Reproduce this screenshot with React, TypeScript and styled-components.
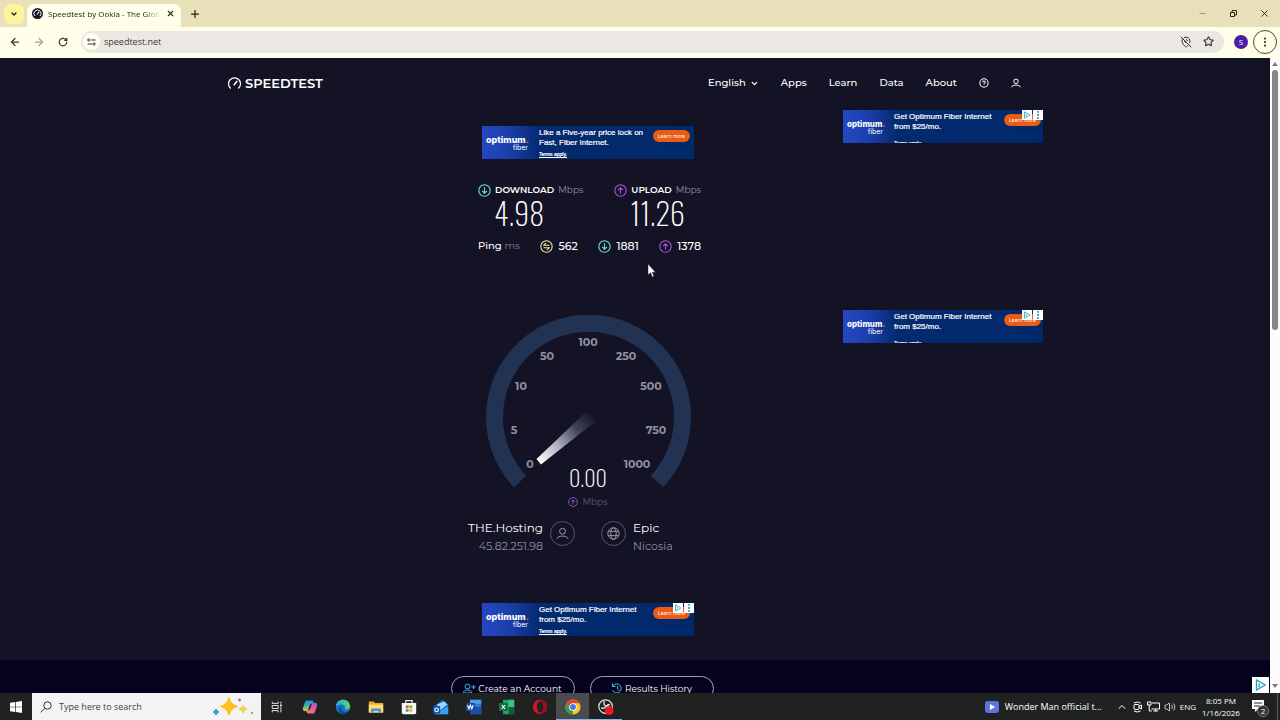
import React from "react";
import styled, { createGlobalStyle, css } from "styled-components";
import {
  ArrowLeft,
  ArrowRight,
  ChevronDown,
  ChevronUp,
  CircleHelp,
  EllipsisVertical,
  MapPinOff,
  Minus,
  Plus,
  RotateCw,
  Star,
  Volume2,
  X,
} from "lucide-react";

const GlobalStyle = createGlobalStyle`
  * { box-sizing: border-box; }
  body { margin: 0; background: #141325; overflow: hidden; }
  button, input { font: inherit; color: inherit; margin: 0; }
  button { background: none; border: 0; padding: 0; cursor: pointer; }
  a { color: inherit; text-decoration: none; }
  h2, p { margin: 0; font-weight: inherit; }
`;

const UI_FONT = `"Open Sans", "Noto Sans", sans-serif`;
const SITE_FONT = `Montserrat, Inter, sans-serif`;
const NARROW_FONT = `Oswald, "Roboto Condensed", "Liberation Sans Narrow", Roboto, sans-serif`;

const Desktop = styled.div`
  display: grid;
  grid-template-rows: 27px 31px minmax(0, 1fr) 27px;
  height: 100vh;
  font-family: ${UI_FONT};
`;

/* ---------- browser chrome ---------- */

const TabStrip = styled.header`
  display: flex;
  align-items: center;
  background: #e8e0b8;
  color: #26251c;
  padding: 0 0 0 4px;
`;

const TabSearch = styled.button`
  display: grid;
  place-items: center;
  width: 20px;
  height: 20px;
  border-radius: 6px;
  background: #fbf49c;
  margin-right: 3px;
`;

const Tab = styled.div`
  display: flex;
  align-items: center;
  align-self: end;
  gap: 5px;
  width: 154px;
  height: 23px;
  padding: 0 6px 4px 5px;
  border-radius: 7px 7px 0 0;
  background: #fffee8;
`;

const TabTitle = styled.span`
  flex: 1;
  overflow: hidden;
  white-space: nowrap;
  font-size: 8px;
  line-height: 14px;
  mask-image: linear-gradient(90deg, #000 86%, transparent);
`;

const IconButton = styled.button<{ $w?: number }>`
  display: grid;
  place-items: center;
  width: ${(p) => p.$w ?? 24}px;
  height: 20px;
  flex: none;
`;

const WindowControls = styled.div`
  display: flex;
  margin-left: auto;
`;

const Toolbar = styled.nav`
  display: flex;
  align-items: center;
  background: #fffee8;
  color: #3a392f;
  padding: 0 3px 2px;
`;

const AddressBar = styled.label`
  display: flex;
  align-items: center;
  flex: 1;
  height: 22px;
  margin: 0 10px 0 6px;
  padding: 0 5px 0 2px;
  border-radius: 11px;
  background: #ebe8e3;
`;

const SiteInfo = styled.span`
  display: grid;
  place-items: center;
  width: 17px;
  height: 17px;
  border-radius: 50%;
  background: #fffef2;
  margin-right: 4px;
`;

const AddressInput = styled.input`
  flex: 1;
  min-width: 0;
  border: 0;
  padding: 0;
  background: none;
  outline: none;
  font-size: 9px;
  line-height: 14px;
`;

const Avatar = styled.button`
  width: 14px;
  height: 14px;
  border-radius: 50%;
  background: #4a1fa5;
  color: #fff;
  font-size: 8px;
  line-height: 14px;
`;

const MenuButton = styled.button`
  display: grid;
  place-items: center;
  width: 24px;
  height: 24px;
  margin-left: 5px;
  border: 1px solid #4d4a20;
  border-radius: 50%;
`;

/* ---------- web page ---------- */

const Viewport = styled.div`
  display: flex;
  min-height: 0;
`;

const Page = styled.div`
  position: relative;
  flex: 1;
  min-width: 0;
  overflow: hidden;
  background: #141325;
  color: #fff;
  font-family: ${SITE_FONT};
`;

const ScrollTrack = styled.div`
  display: flex;
  flex-direction: column;
  align-items: center;
  width: 10px;
  background: #fcfcfc;
`;

const ScrollArrow = styled.span<{ $down?: boolean }>`
  border: 3px solid transparent;
  border-top-width: ${(p) => (p.$down ? 4 : 0)}px;
  border-bottom-width: ${(p) => (p.$down ? 0 : 4)}px;
  ${(p) => (p.$down ? "border-top-color" : "border-bottom-color")}: #7b7b7b;
  margin: ${(p) => (p.$down ? "auto 0 5px" : "4px 0")};
`;

const ScrollThumb = styled.div`
  width: 6px;
  height: 41%;
  border-radius: 3px;
  background: #858585;
`;

const Container = styled.div`
  width: 100%;
  max-width: 816px;
  margin: 0 auto;
`;

const SiteHeader = styled(Container)`
  display: flex;
  align-items: center;
  height: 50px;
  padding: 0 22px 0 1px;
`;

const Brand = styled.a`
  display: flex;
  align-items: center;
  gap: 4px;
  font-size: 13px;
  line-height: 16px;
  font-weight: 600;
`;

const SiteNav = styled.nav`
  display: flex;
  align-items: center;
  gap: 22px;
  margin-left: auto;
  font-size: 10px;
  line-height: 16px;
  font-weight: 500;

  a, button { display: flex; align-items: center; gap: 4px; }
`;

const Columns = styled(Container)`
  display: grid;
  grid-template-columns: minmax(0, 1fr) 200px;
  height: 552px;
`;

const TestColumn = styled.main`
  display: flex;
  flex-direction: column;
  align-items: center;
  padding: 18px 0 0 106px;
`;

const AdColumn = styled.aside`
  display: flex;
  flex-direction: column;
  gap: 167px;
  padding-top: 2px;
`;

const AdBox = styled.a<{ $compact?: boolean }>`
  position: relative;
  display: flex;
  width: ${(p) => (p.$compact ? 200 : 212)}px;
  height: 33px;
  padding: ${(p) => (p.$compact ? "2px 2px 0 4px" : "2px 4px 0 4px")};
  overflow: hidden;
  background: linear-gradient(90deg, #2448c4 0, #1c3fae 12%, #042a70 27%, #00296a 100%);
  font-family: Inter, sans-serif;
`;

const AdLogo = styled.span<{ $compact?: boolean }>`
  flex: none;
  width: ${(p) => (p.$compact ? 38 : 44)}px;
  margin: 8px 9px 0 0;
  font-size: ${(p) => (p.$compact ? 8 : 9)}px;
  line-height: 8px;
  font-weight: 800;

  i { color: #f26722; font-style: normal; }
  small { display: block; font-size: 7px; line-height: 7px; font-weight: 400; text-align: right; padding-right: 2px; }
`;

const AdCopy = styled.span<{ $compact?: boolean }>`
  flex: 1;
  white-space: nowrap;
  font-family: "Liberation Sans", sans-serif;
  font-size: 8px;
  line-height: 10px;
  -webkit-text-stroke: 0.2px #fff;

  u { display: block; font-size: 5px; line-height: 8px; margin-top: ${(p) => (p.$compact ? 7 : 2)}px; }
`;

const AdAction = styled.span`
  flex: none;
  width: 37px;
  height: 12px;
  margin-top: 2px;
  border-radius: 6px;
  background: #ea5b16;
  font-size: 5px;
  line-height: 12px;
  text-align: center;
`;

const AdMarks = styled.span`
  position: absolute;
  top: 0;
  right: 0;
  display: flex;
  gap: 1px;

  svg { display: block; background: #fff; }
`;

const Results = styled.section`
  display: flex;
  justify-content: space-between;
  width: 226px;
  padding-left: 3px;
  margin-top: 23px;
`;

const Result = styled.div`
  display: flex;
  flex-direction: column;
`;

const ResultTitle = styled.h2`
  display: flex;
  align-items: center;
  gap: 4px;
  font-size: 9px;
  line-height: 16px;
  font-weight: 600;

  small { font-size: 9px; font-weight: 400; color: #9192a6; }
`;

const bigNumber = css`
  font-family: ${NARROW_FONT};
  font-weight: 200;
`;

const ResultValue = styled.p`
  ${bigNumber}
  padding-left: 16px;
  font-size: 30px;
  line-height: 30px;
`;

const PingRow = styled.section`
  display: flex;
  align-items: center;
  justify-content: space-between;
  width: 226px;
  padding-left: 3px;
  margin-top: 10px;
  font-size: 10px;
  line-height: 16px;
  font-weight: 500;

  small { font-size: 10px; font-weight: 400; color: #7d7e92; }
`;

const PingItem = styled.span`
  display: flex;
  align-items: center;
  gap: 5px;
  font-size: 11px;
`;

const Gauge = styled.section`
  display: grid;
  justify-items: center;
  height: 195px;
  margin-top: 61px;

  > * { grid-area: 1 / 1; }
`;

const GaugeLabel = styled.text`
  fill: #9091a2;
  font-size: 11px;
  font-weight: 700;
  text-anchor: middle;
`;

const Readout = styled.div`
  display: flex;
  flex-direction: column;
  align-items: center;
  align-self: end;
`;

const ReadoutValue = styled.output`
  ${bigNumber}
  font-size: 22px;
  line-height: 34px;
`;

const ReadoutUnit = styled.span`
  display: flex;
  align-items: center;
  gap: 4px;
  font-size: 9px;
  line-height: 16px;
  color: #5d5e72;
`;

const Hosts = styled.section`
  display: grid;
  grid-template-columns: 1fr 1fr;
  gap: 26px;
  width: 100%;
  margin-top: 8px;
`;

const Host = styled.div<{ $reverse?: boolean }>`
  display: flex;
  align-items: flex-start;
  flex-direction: ${(p) => (p.$reverse ? "row-reverse" : "row")};
  text-align: ${(p) => (p.$reverse ? "right" : "left")};
  gap: 7px;
  font-size: 12px;
  line-height: 20px;

  small { display: block; font-size: 11px; line-height: 16px; color: #8f90a3; }
`;

const HostIcon = styled.span`
  display: grid;
  place-items: center;
  width: 25px;
  height: 25px;
  margin-top: 3px;
  border: 1px solid #55566b;
  border-radius: 50%;
  color: #a3a4b4;
`;

const BottomAd = styled.div`
  margin-top: 49px;
`;

const PageFooter = styled.footer`
  height: 60px;
  padding: 16px 106px 0 0;
  background: #05021e;
`;

const FooterActions = styled.div`
  display: flex;
  justify-content: center;
  gap: 15px;
`;

const PillButton = styled.button`
  display: flex;
  align-items: center;
  justify-content: center;
  gap: 2px;
  width: 124px;
  height: 25px;
  border: 1px solid #9fa0b4;
  border-radius: 13px;
  font-size: 9px;
  line-height: 16px;
`;

const CornerMark = styled.a`
  position: absolute;
  right: 1px;
  bottom: 0;
  display: block;
  width: 17px;
  height: 16px;
  background: #fff;
`;

const Cursor = styled.svg`
  position: absolute;
  top: 205px;
  left: calc(50% + 12px);
`;

/* ---------- taskbar ---------- */

const Taskbar = styled.footer`
  display: flex;
  align-items: stretch;
  background: #202222;
  color: #fff;
  font-size: 8px;
`;

const StartButton = styled.button`
  display: grid;
  place-items: center;
  width: 32px;
`;

const SearchBox = styled.label`
  display: flex;
  align-items: center;
  gap: 7px;
  width: 229px;
  padding: 0 5px 0 8px;
  background: #f3f3f3;
  color: #333;
`;

const SearchInput = styled.input`
  flex: 1;
  min-width: 0;
  border: 0;
  padding: 0;
  outline: none;
  background: none;
  font-size: 9px;
  line-height: 16px;

  &::placeholder { color: #444; opacity: 1; }
`;

const TaskApps = styled.div`
  display: grid;
  grid-template-columns: repeat(11, minmax(0, 1fr));
  width: 361px;
`;

const TaskApp = styled.button<{ $active?: boolean; $running?: boolean }>`
  display: grid;
  place-items: center;
  background: ${(p) => (p.$active ? "#4a4b4d" : "none")};
  border-top: 1px solid transparent;
  border-bottom: 1px solid ${(p) => (p.$active || p.$running ? "#76b9ed" : "transparent")};
`;

const Tray = styled.div`
  display: flex;
  align-items: center;
  gap: 4px;
  margin-left: auto;
  padding-right: 2px;
`;

const NewsButton = styled.button`
  display: flex;
  align-items: center;
  gap: 6px;
  margin-right: 10px;
  font-size: 9px;
`;

const Clock = styled.time`
  width: 42px;
  font-size: 8px;
  line-height: 12px;
  text-align: center;
`;

const Notifications = styled.button`
  width: 20px;
  height: 20px;
  margin-left: 4px;
`;

const ShowDesktop = styled.span`
  width: 1px;
  height: 27px;
  margin-left: 3px;
  background: #5a5b5b;
`;

/* ---------- drawings ---------- */

const SpeedGlyph = () => (
  <svg width="13" height="13" viewBox="0 0 26 26" fill="none" stroke="currentColor" strokeWidth="2.4" aria-hidden="true">
    <path d="M5.500 23A12 12 0 1 1 20.500 23" />
    <path d="M11.500 16.500 18.500 8" strokeWidth="3.200" />
  </svg>
);

const Favicon = () => (
  <svg width="11" height="11" viewBox="0 0 22 22" aria-hidden="true">
    <circle cx="11" cy="11" r="11" fill="#141526" />
    <path d="M6 16a7 7 0 1 1 10 0" fill="none" stroke="#fff" strokeWidth="2" />
    <path d="m10 13 4-5" stroke="#fff" strokeWidth="2.400" />
  </svg>
);

type Direction = "down" | "up" | "idle";
const tone: Record<Direction, string> = { down: "#6fe3cf", up: "#a459dc", idle: "#f0eb9a" };
const mark: Record<Direction, string> = {
  down: "M12 6v11M7.500 12.500 12 17l4.500-4.500",
  up: "M12 18V7M7.500 11.500 12 7l4.500 4.500",
  idle: "M17.500 9.800H7l4-4M6.500 14.200H17l-4 4",
};
const DirectionIcon = ({ kind, size = 13 }: { kind: Direction; size?: number }) => (
  <svg width={size} height={size} viewBox="0 0 24 24" fill="none" stroke={tone[kind]} strokeWidth="2" aria-hidden="true">
    <circle cx="12" cy="12" r="10.500" />
    <path d={mark[kind]} />
  </svg>
);

const PersonIcon = ({ size, width = 1.6 }: { size: number; width?: number }) => (
  <svg width={size} height={size} viewBox="0 0 20 20" fill="none" stroke="currentColor" strokeWidth={width} aria-hidden="true">
    <circle cx="10" cy="6.500" r="4.500" />
    <path d="M1.500 18.500c0-6 17-6 17 0" />
  </svg>
);

const GlobeIcon = () => (
  <svg width="13" height="13" viewBox="0 0 24 24" fill="none" stroke="currentColor" strokeWidth="1.700" aria-hidden="true">
    <circle cx="12" cy="12" r="10.500" />
    <ellipse cx="12" cy="12" rx="5" ry="10.500" />
    <path d="M2.500 8h19M2.500 16h19" />
  </svg>
);

const ChoicePath = () => (
  <>
    <path d="M3 2.200v7.600L9.500 6z" fill="none" stroke="#25a5bd" strokeWidth="1" />
    <path d="M5 4.800v2.800" stroke="#25a5bd" />
  </>
);

const labels: [string, number, number][] = [
  ["0", 46, 153],
  ["5", 30, 119],
  ["10", 37, 75],
  ["50", 63, 45],
  ["100", 104, 31],
  ["250", 142, 45],
  ["500", 167, 75],
  ["750", 172, 119],
  ["1000", 153, 153],
];

const GaugeDial = () => (
  <svg width="208" height="174" viewBox="0 0 208 174" role="img" aria-label="Speed gauge">
    <defs>
      <linearGradient id="needle" gradientUnits="userSpaceOnUse" x1="55" y1="148" x2="110" y2="100">
        <stop offset="0" stopColor="#fff" />
        <stop offset=".35" stopColor="#b0b0bd" />
        <stop offset=".7" stopColor="#3c4358" />
        <stop offset="1" stopColor="#141325" />
      </linearGradient>
    </defs>
    <path d="M36 166.500A94 94 0 1 1 173 166.500" fill="none" stroke="#213253" strokeWidth="17" />
    <path d="M52.500 144 57 149.500 112 106 103 96z" fill="url(#needle)" />
    {labels.map(([text, x, y]) => (
      <GaugeLabel key={text} x={x} y={y}>{text}</GaugeLabel>
    ))}
  </svg>
);

const Ad = ({ lines, compact, marks }: { lines: string[]; compact?: boolean; marks?: boolean }) => (
  <AdBox href="#" $compact={compact}>
    <AdLogo $compact={compact}>optimum<i>.</i><small>fiber</small></AdLogo>
    <AdCopy $compact={compact}>
      {lines[0]}<br />{lines[1]}
      <u>Terms apply.</u>
    </AdCopy>
    <AdAction>Learn more</AdAction>
    {marks && (
      <AdMarks>
        <svg width="10" height="10" viewBox="0 0 12 12"><ChoicePath /></svg>
        <svg width="10" height="10" viewBox="0 0 10 11" fill="#25a5bd"><path d="M4 1h2v2H4zM4 4.500h2v2H4zM4 8h2v2H4z" /></svg>
      </AdMarks>
    )}
  </AdBox>
);

const apps: { name: string; art: React.ReactNode; active?: boolean; running?: boolean }[] = [
  {
    name: "Task View",
    art: <g fill="none" stroke="#f4f4f4" strokeWidth="1.500"><path d="M2 1v3h10V1M2 19v-3h10v3M2 7.500h10v5H2zM16.500 1v3.500M16.500 9v10" /><path d="M15 7h3" strokeWidth="2.500" /></g>,
  },
  {
    name: "Copilot",
    art: <>
      <defs>
        <linearGradient id="copA" x1="0" y1="0" x2="0" y2="1"><stop stopColor="#1f8df0" /><stop offset=".5" stopColor="#35b6a0" /><stop offset="1" stopColor="#f3c62c" /></linearGradient>
        <linearGradient id="copB" x1="1" y1="0" x2="0" y2="1"><stop stopColor="#a052e8" /><stop offset=".5" stopColor="#ea5a9b" /><stop offset="1" stopColor="#f78a3c" /></linearGradient>
      </defs>
      <path d="M6 2h6q2 0 2.500 2L15 6h-3q-2 0-2.500 2L8 13q-.7 2-2.500 2H3q-2.500 0-2-3L3.500 4.500Q4 2 6 2z" fill="url(#copA)" />
      <path d="M14 18H8q-2 0-2.500-2L5 14h3q2 0 2.500-2L12 7q.7-2 2.500-2H17q2.500 0 2 3l-2.500 7.500Q16 18 14 18z" fill="url(#copB)" />
    </>,
  },
  {
    name: "Edge",
    art: <>
      <defs><linearGradient id="edge" x1="0" y1="0" x2="1" y2="0"><stop stopColor="#2aa7e6" /><stop offset="1" stopColor="#5fd467" /></linearGradient></defs>
      <circle cx="10" cy="10" r="9" fill="#1470c8" />
      <path d="M1 10a9 9 0 0 1 18-1c.3 4-5 5-7 3.500 2-3-1-5.500-4-5.500-4 0-6.500 2-7 3z" fill="url(#edge)" />
      <path d="M8 9c-2 6 4 9 9 6-2 3.500-8 5-11 1.500C4 14 5.500 10.500 8 9z" fill="#0d4a97" />
    </>,
  },
  {
    name: "File Explorer",
    art: <><path d="M1 3h6l2 2h10v12H1z" fill="#e9aa2b" /><path d="M1 7h18v10H1z" fill="#ffdc76" /><path d="M4 17v-5h12v5h-3v-2H7v2z" fill="#3a95dc" /></>,
  },
  {
    name: "Microsoft Store",
    art: <><path d="M6 5V2h8v3" fill="none" stroke="#e8e8e8" strokeWidth="1.500" /><path d="M1 5h18v12q0 2-2 2H3q-2 0-2-2z" fill="#f6f6f6" /><path d="M6 8h3.500v3.500H6z" fill="#e8502b" /><path d="M10.500 8H14v3.500h-3.500z" fill="#79b82d" /><path d="M6 12.500h3.500V16H6z" fill="#2aa1e0" /><path d="M10.500 12.500H14V16h-3.500z" fill="#f6b61c" /></>,
  },
  {
    name: "Outlook",
    art: <><path d="m2 8 10-7 7 6v11q0 1-1 1H3q-1 0-1-1z" fill="#1b66c9" /><path d="m5 7 9-4 4 4-9 7z" fill="#9bd8ff" /><path d="m2 19 17-10v9q0 1-1 1z" fill="#35a4ef" /><path d="M0 9h9v9H0z" fill="#0d4ea6" /><circle cx="4.500" cy="13.500" r="2.300" fill="none" stroke="#fff" strokeWidth="1.400" /></>,
  },
  {
    name: "Word",
    art: <><path d="M5 1h14v18H5z" fill="#2f7cd6" /><path d="M5 10h14v9H5z" fill="#1b4fa5" /><path d="M5 1h14v5H5z" fill="#48a0ec" /><path d="M0 5h11v10H0z" fill="#174a9c" /><path d="m2 7.500 1.700 5 1.800-5 1.800 5 1.700-5" fill="none" stroke="#fff" strokeWidth="1.300" /></>,
  },
  {
    name: "Excel",
    art: <><path d="M5 1h14v18H5z" fill="#22a466" /><path d="M12 10h7v9h-7z" fill="#145c37" /><path d="M12 1h7v9h-7z" fill="#35c481" /><path d="M0 5h11v10H0z" fill="#10703f" /><path d="m3.500 7.500 4 5m0-5-4 5" stroke="#fff" strokeWidth="1.500" /></>,
  },
  {
    name: "Opera",
    art: <><circle cx="10" cy="10" r="9" fill="#d5122b" /><path d="M10 1a9 9 0 0 1 0 18z" fill="#97101f" /><ellipse cx="10" cy="10" rx="4" ry="6.800" fill="#202222" /></>,
  },
  {
    name: "Chrome",
    active: true,
    art: <><circle cx="10" cy="10" r="9.500" fill="#f9c523" /><path d="M1.800 5.200A9.500 9.500 0 0 1 18.200 5.200H10L6 12.300z" fill="#e44234" /><path d="M1.800 5.200 6 12.300l4 2.500-.5 4.700A9.500 9.500 0 0 1 1.800 5.200z" fill="#30a04f" /><circle cx="10" cy="10" r="4.800" fill="#fff" /><circle cx="10" cy="10" r="3.700" fill="#3c7eea" /></>,
  },
  {
    name: "OBS Studio",
    running: true,
    art: <><circle cx="9.500" cy="9.500" r="8.500" fill="#242526" stroke="#ddd" strokeWidth="1.500" /><path d="M8 3q-2 4 2 6 4-1 5 3M10 9q-2 4-6 2M10 9q3-3 5-2" fill="none" stroke="#ddd" strokeWidth="1.700" /><circle cx="14" cy="14.500" r="5.500" fill="#f01818" /></>,
  },
];

export default function App() {
  return (
    <Desktop>
      <GlobalStyle />
      <TabStrip>
        <TabSearch aria-label="Search tabs"><ChevronDown size={8} strokeWidth={4} /></TabSearch>
        <Tab>
          <Favicon />
          <TabTitle>Speedtest by Ookla - The Globe</TabTitle>
          <IconButton $w={10} aria-label="Close tab"><X size={9} strokeWidth={3} /></IconButton>
        </Tab>
        <IconButton $w={27} aria-label="New tab"><Plus size={12} strokeWidth={2.5} /></IconButton>
        <WindowControls>
          <IconButton $w={31} aria-label="Minimize"><Minus size={9} strokeWidth={1} /></IconButton>
          <IconButton $w={31} aria-label="Restore">
            <svg width="7" height="7" viewBox="0 0 7 7" fill="none" stroke="currentColor"><path d="M.5 2.500h4v4h-4zM2 2.500V.5h4.500V5H4.500" /></svg>
          </IconButton>
          <IconButton $w={31} aria-label="Close"><X size={11} strokeWidth={2} /></IconButton>
        </WindowControls>
      </TabStrip>

      <Toolbar>
        <IconButton aria-label="Back"><ArrowLeft size={12} strokeWidth={2.5} /></IconButton>
        <IconButton aria-label="Forward"><ArrowRight size={12} strokeWidth={2.5} color="#a5a496" /></IconButton>
        <IconButton aria-label="Reload"><RotateCw size={10} strokeWidth={3} /></IconButton>
        <AddressBar>
          <SiteInfo>
            <svg width="9" height="8" viewBox="0 0 18 16" fill="none" stroke="currentColor" strokeWidth="2"><circle cx="3.500" cy="4" r="2.200" /><path d="M8 4h9M1 12h9" /><circle cx="14" cy="12" r="2.200" /></svg>
          </SiteInfo>
          <AddressInput aria-label="Address" defaultValue="speedtest.net" />
          <IconButton $w={22} aria-label="Location blocked"><MapPinOff size={12} /></IconButton>
          <IconButton $w={22} aria-label="Bookmark"><Star size={11} strokeWidth={2.5} /></IconButton>
        </AddressBar>
        <Avatar aria-label="Profile">S</Avatar>
        <MenuButton aria-label="Menu"><EllipsisVertical size={12} strokeWidth={2.500} /></MenuButton>
      </Toolbar>

      <Viewport>
        <Page>
          <SiteHeader as="header">
            <Brand href="#"><SpeedGlyph />SPEEDTEST</Brand>
            <SiteNav>
              <button>English <ChevronDown size={9} strokeWidth={3.5} /></button>
              <a href="#">Apps</a>
              <a href="#">Learn</a>
              <a href="#">Data</a>
              <a href="#">About</a>
              <a href="#" aria-label="Help"><CircleHelp size={10} strokeWidth={2.5} /></a>
              <a href="#" aria-label="Account"><PersonIcon size={10} width={2} /></a>
            </SiteNav>
          </SiteHeader>

          <Columns>
            <TestColumn>
              <Ad lines={["Like a Five-year price lock on", "Fast, Fiber Internet."]} />
              <Results>
                <Result>
                  <ResultTitle><DirectionIcon kind="down" />DOWNLOAD <small>Mbps</small></ResultTitle>
                  <ResultValue>4.98</ResultValue>
                </Result>
                <Result>
                  <ResultTitle><DirectionIcon kind="up" />UPLOAD <small>Mbps</small></ResultTitle>
                  <ResultValue>11.26</ResultValue>
                </Result>
              </Results>
              <PingRow>
                <span>Ping <small>ms</small></span>
                <PingItem><DirectionIcon kind="idle" />562</PingItem>
                <PingItem><DirectionIcon kind="down" />1881</PingItem>
                <PingItem><DirectionIcon kind="up" />1378</PingItem>
              </PingRow>
              <Gauge>
                <GaugeDial />
                <Readout>
                  <ReadoutValue>0.00</ReadoutValue>
                  <ReadoutUnit><DirectionIcon kind="up" size={10} />Mbps</ReadoutUnit>
                </Readout>
              </Gauge>
              <Hosts>
                <Host $reverse>
                  <HostIcon><PersonIcon size={13} width={1.400} /></HostIcon>
                  <span>THE.Hosting<small>45.82.251.98</small></span>
                </Host>
                <Host>
                  <HostIcon><GlobeIcon /></HostIcon>
                  <span>Epic<small>Nicosia</small></span>
                </Host>
              </Hosts>
              <BottomAd><Ad marks lines={["Get Optimum Fiber Internet", "from $25/mo."]} /></BottomAd>
            </TestColumn>
            <AdColumn>
              <Ad compact marks lines={["Get Optimum Fiber Internet", "from $25/mo."]} />
              <Ad compact marks lines={["Get Optimum Fiber Internet", "from $25/mo."]} />
            </AdColumn>
          </Columns>

          <PageFooter>
            <FooterActions>
              <PillButton>
                <svg width="13" height="11" viewBox="0 0 26 22" fill="none" stroke="#45b3e8" strokeWidth="2"><circle cx="9" cy="7" r="5" /><path d="M1 20c0-8 16-8 16 0zM21 4v8M17 8h8" /></svg>
                Create an Account
              </PillButton>
              <PillButton>
                <svg width="12" height="11" viewBox="0 0 24 22" fill="none" stroke="#45b3e8" strokeWidth="2"><path d="M4 6a9 9 0 1 1-1 8M3 1v6h6M13 6v6l4 3" /></svg>
                Results History
              </PillButton>
            </FooterActions>
          </PageFooter>

          <CornerMark href="#" aria-label="Ad choices">
            <svg width="17" height="16" viewBox="0 0 12 12"><ChoicePath /></svg>
          </CornerMark>
          <Cursor width="9" height="15" viewBox="0 0 9 15" aria-hidden="true">
            <path d="M1 1v11l2.500-2.300L5.300 14l1.700-.8-1.800-4H8.500z" fill="#fff" stroke="#222" strokeWidth=".5" />
          </Cursor>
        </Page>
        <ScrollTrack>
          <ScrollArrow />
          <ScrollThumb />
          <ScrollArrow $down />
        </ScrollTrack>
      </Viewport>

      <Taskbar>
        <StartButton aria-label="Start">
          <svg width="12" height="12" viewBox="0 0 12 12" fill="#fff"><path d="M0 1.700 5.300 1v4.700H0zM6 .9 12 0v5.700H6zM0 6.300h5.300V11L0 10.300zM6 6.300h6V12l-6-.9z" /></svg>
        </StartButton>
        <SearchBox>
          <svg width="12" height="12" viewBox="0 0 12 12" fill="none" stroke="currentColor" aria-hidden="true"><circle cx="7.500" cy="4.500" r="3.700" /><path d="M5 7.200.8 11.400" /></svg>
          <SearchInput aria-label="Search" placeholder="Type here to search" />
          <svg width="44" height="22" viewBox="0 0 44 22" aria-hidden="true">
            <path d="M17 2q1.500 7 8 8.500-6.500 1.500-8 8-1.500-6.500-8-8Q15.500 9 17 2z" fill="#fbc21d" stroke="#fbc21d" strokeWidth="1.500" strokeLinejoin="round" />
            <path d="M31 9q.8 3 4 4-3.200.8-4 4-.8-3.200-4-4 3.200-1 4-4z" fill="#f6cf4e" stroke="#f6cf4e" />
            <path d="M4 13q.7 2.500 3 3-2.300.7-3 3-.7-2.300-3-3 2.300-.5 3-3z" fill="#2997dc" stroke="#2997dc" />
            <circle cx="27.500" cy="4" r="1.400" fill="#b56a55" /><circle cx="40" cy="17" r="1.200" fill="#a8b23c" />
          </svg>
        </SearchBox>
        <TaskApps>
          {apps.map((app) => (
            <TaskApp key={app.name} aria-label={app.name} $active={app.active} $running={app.running}>
              <svg width={app.name === "Task View" ? 12 : 16} height={app.name === "Task View" ? 12 : 16} viewBox="0 0 20 20">{app.art}</svg>
            </TaskApp>
          ))}
        </TaskApps>
        <Tray>
          <NewsButton>
            <svg width="14" height="12" viewBox="0 0 14 12"><rect width="14" height="12" rx="3" fill="#6172e2" /><path d="M5 3v6l5-3z" fill="#fff" /></svg>
            Wonder Man official t...
          </NewsButton>
          <ChevronUp size={12} />
          <svg width="11" height="12" viewBox="0 0 22 24" fill="none" stroke="#fff" strokeWidth="2"><rect x="4" y="7" width="10" height="10" rx="2" /><path d="m14 11 5-3v8l-5-3M4 4q7-4 13 0M4 20q7 4 13 0" /></svg>
          <svg width="13" height="11" viewBox="0 0 26 22" fill="none" stroke="#fff" strokeWidth="2"><path d="M10 4h15v12H9M13 20h9M17 16v4M1 2h7v6H1zM4.500 8v12h5" /></svg>
          <Volume2 size={12} strokeWidth={1.500} />
          <span>ENG</span>
          <Clock>8:05 PM<br />1/16/2026</Clock>
          <Notifications aria-label="Notifications, 2 new">
            <svg width="20" height="20" viewBox="0 0 20 20">
              <path d="M2 3h12v9H8l-3 3v-3H2z" fill="#fff" /><path d="M4 6h8M4 9h6" stroke="#222" />
              <circle cx="13" cy="14" r="5.500" fill="#333535" stroke="#999" strokeWidth=".7" />
              <text x="13" y="17" fill="#fff" fontSize="8" textAnchor="middle">2</text>
            </svg>
          </Notifications>
          <ShowDesktop />
        </Tray>
      </Taskbar>
    </Desktop>
  );
}
